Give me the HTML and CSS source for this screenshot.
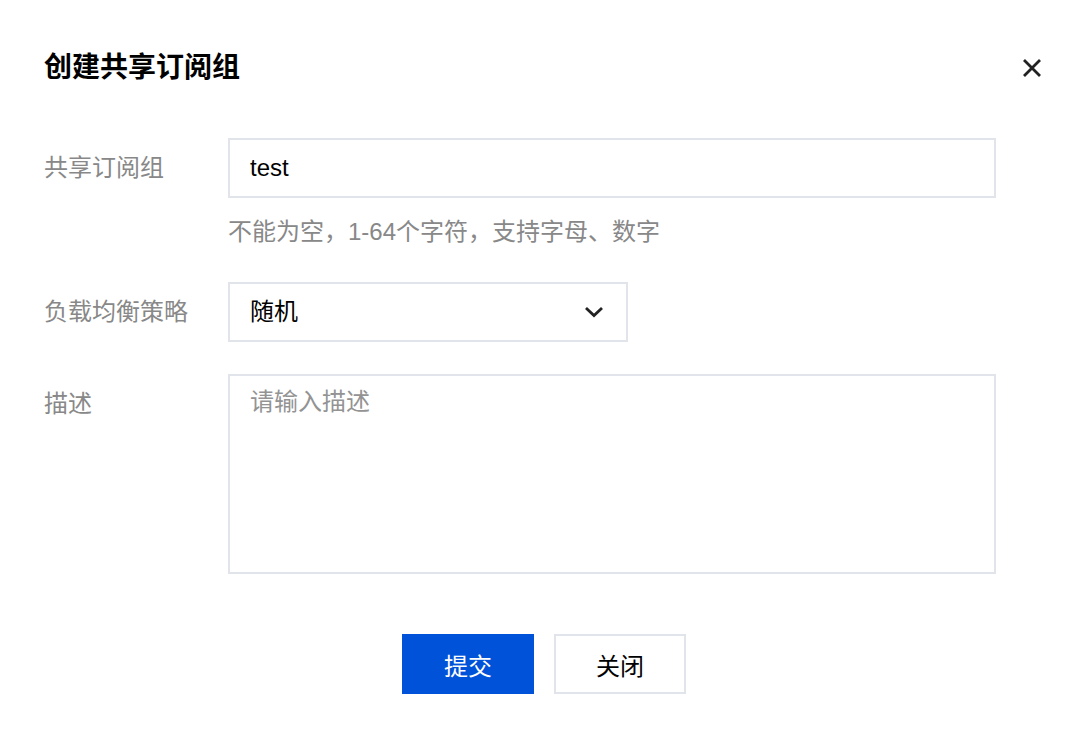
FILE: index.html
```html
<!DOCTYPE html>
<html lang="zh-CN">
<head>
<meta charset="utf-8">
<title>创建共享订阅组</title>
<link rel="stylesheet" href="styles.css">
</head>
<body>
<div class="dialog">
  <div class="header">
    <h1 class="title">创建共享订阅组</h1>
    <button class="close" aria-label="关闭">
      <svg width="20" height="20" viewBox="0 0 20 20"><path d="M2 2 L18 18 M18 2 L2 18" stroke="#222" stroke-width="2.8" fill="none"/></svg>
    </button>
  </div>
  <div class="form">
    <div class="row">
      <div class="label">共享订阅组</div>
      <div class="field">
        <div class="input wide">test</div>
        <div class="hint">不能为空，1-64个字符，支持字母、数字</div>
      </div>
    </div>
    <div class="row">
      <div class="label">负载均衡策略</div>
      <div class="field">
        <div class="input select">
          <span>随机</span>
          <svg width="20" height="12" viewBox="0 0 20 12"><path d="M2 2 L10 9.5 L18 2" stroke="#222" stroke-width="2.8" fill="none"/></svg>
        </div>
      </div>
    </div>
    <div class="row">
      <div class="label">描述</div>
      <div class="field">
        <div class="input wide textarea"><span class="placeholder">请输入描述</span></div>
      </div>
    </div>
  </div>
  <div class="footer">
    <button class="btn primary">提交</button>
    <button class="btn">关闭</button>
  </div>
</div>
</body>
</html>
```
FILE: styles.css
```css
* { box-sizing: border-box; }
html, body { margin: 0; background: #fff; }
body {
  font-family: "Liberation Sans", "Noto Sans CJK SC", sans-serif;
  color: #000;
}
.dialog { padding: 48px 44px 0 44px; width: 1088px; }
.header {
  display: flex;
  justify-content: space-between;
  align-items: center;
  height: 40px;
}
.title {
  margin: 0;
  font-size: 28px;
  font-weight: bold;
  line-height: 40px;
  color: #000;
}
.close {
  border: 0;
  background: none;
  padding: 0;
  margin-right: 2px;
  width: 20px;
  height: 20px;
  display: flex;
}
.form {
  margin-top: 50px;
  display: flex;
  flex-direction: column;
  gap: 32px;
}
.row { display: flex; }
.label {
  width: 184px;
  flex: none;
  font-size: 24px;
  line-height: 60px;
  color: #888;
}
.input {
  border: 2px solid #e1e4ea;
  height: 60px;
  padding: 0 20px;
  font-size: 24px;
  line-height: 56px;
  color: #000;
}
.wide { width: 768px; }
.hint {
  margin-top: 16px;
  font-size: 24px;
  line-height: 36px;
  color: #888;
}
.select {
  width: 400px;
  display: flex;
  justify-content: space-between;
  align-items: center;
  padding-right: 22px;
}
.textarea {
  height: 200px;
  line-height: 52px;
}
.placeholder { color: #939393; }
.footer {
  margin-top: 60px;
  display: flex;
  justify-content: center;
  gap: 20px;
}
.btn {
  width: 132px;
  height: 60px;
  border: 2px solid #e1e4ea;
  background: #fff;
  font-family: "Liberation Sans", "Noto Sans CJK SC", sans-serif;
  font-size: 24px;
  color: #000;
  padding: 0;
  box-shadow: 0 4px 0 #f6f7f9;
}
.btn.primary {
  background: #0052d9;
  border-color: #0052d9;
  color: #fff;
  box-shadow: 0 4px 0 #eef4fe;
}
```
